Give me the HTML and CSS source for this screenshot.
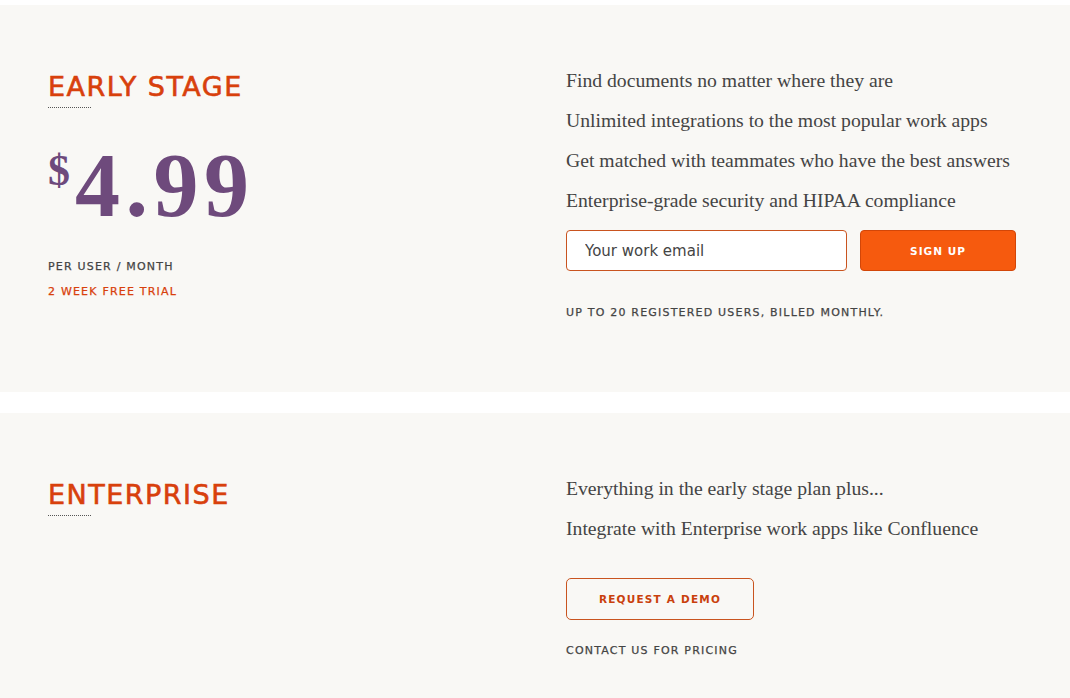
FILE: index.html
```html
<!DOCTYPE html>
<html lang="en">
<head>
<meta charset="utf-8">
<title>Pricing</title>
<link rel="stylesheet" href="styles.css">
</head>
<body>
<main class="page">
  <section class="plan plan-early">
    <div class="plan-left">
      <h2 class="plan-title">EARLY STAGE</h2>
      <div class="price"><span class="currency">$</span><span class="amount">4.99</span></div>
      <p class="caption">PER USER / MONTH</p>
      <p class="caption accent">2 WEEK FREE TRIAL</p>
    </div>
    <div class="plan-right">
      <ul class="features">
        <li>Find documents no matter where they are</li>
        <li>Unlimited integrations to the most popular work apps</li>
        <li>Get matched with teammates who have the best answers</li>
        <li>Enterprise-grade security and HIPAA compliance</li>
      </ul>
      <form class="signup" onsubmit="return false">
        <input class="email" type="email" placeholder="Your work email">
        <button class="btn-primary" type="submit">SIGN UP</button>
      </form>
      <p class="caption note">UP TO 20 REGISTERED USERS, BILLED MONTHLY.</p>
    </div>
  </section>
  <section class="plan plan-enterprise">
    <div class="plan-left">
      <h2 class="plan-title">ENTERPRISE</h2>
    </div>
    <div class="plan-right">
      <ul class="features">
        <li>Everything in the early stage plan plus...</li>
        <li>Integrate with Enterprise work apps like Confluence</li>
      </ul>
      <button class="btn-outline" type="button">REQUEST A DEMO</button>
      <p class="caption contact">CONTACT US FOR PRICING</p>
    </div>
  </section>
</main>
</body>
</html>
```

FILE: styles.css
```css
* { box-sizing: border-box; }
html, body { margin: 0; padding: 0; background: #ffffff; }
body { font-family: "Liberation Serif", serif; color: #444; }

.page {
  padding-top: 5px;
  display: flex;
  flex-direction: column;
  gap: 21px;
}

.plan {
  background: #f9f8f5;
  display: grid;
  grid-template-columns: 518px 450px;
  padding: 0 48px;
}
.plan-early { height: 387px; padding-top: 66px; }
.plan-enterprise { height: 300px; padding-top: 66px; }

.plan-right { margin-top: -11px; }

.plan-title {
  margin: 0;
  font-family: "DejaVu Sans", sans-serif;
  font-weight: 400;
  font-size: 27px;
  line-height: 32px;
  letter-spacing: 1.5px;
  color: #d8400c;
  -webkit-text-stroke: 0.6px #d8400c;
}
.plan-title::after {
  content: "";
  display: block;
  width: 43px;
  margin-top: 4px;
  border-top: 1px dotted #555;
}

.price {
  display: flex;
  align-items: flex-start;
  margin-top: 38px;
  color: #6e4a7c;
  font-family: "Liberation Serif", serif;
  font-weight: 700;
}
.currency {
  font-size: 44px;
  line-height: 40px;
  margin-top: 5px;
  margin-right: 5px;
}
.amount {
  font-size: 90px;
  line-height: 80px;
  letter-spacing: 5.5px;
}

.caption {
  margin: 0;
  font-family: "DejaVu Sans", sans-serif;
  font-size: 11px;
  line-height: 14px;
  letter-spacing: 1.2px;
  color: #444;
  -webkit-text-stroke: 0.25px currentColor;
}
.plan-left .caption:first-of-type { margin-top: 34px; }
.caption.accent { color: #d8400c; margin-top: 11px; }

.features {
  list-style: none;
  margin: 0;
  padding: 0;
  font-size: 19.7px;
  line-height: 40px;
  color: #444;
}

.signup {
  display: flex;
  gap: 13px;
  margin-top: 10px;
}
.email {
  width: 281px;
  height: 41px;
  border: 1px solid #c9541f;
  border-radius: 4px;
  background: #fff;
  padding: 0 18px;
  font-family: "DejaVu Sans", sans-serif;
  font-size: 15px;
  color: #444;
}
.email::placeholder { color: #444; }
.btn-primary {
  width: 156px;
  height: 41px;
  border: 1px solid #d24608;
  border-radius: 4px;
  background: #f65a0e;
  color: #fff;
  font-family: "DejaVu Sans", sans-serif;
  font-weight: 700;
  font-size: 10.5px;
  letter-spacing: 1px;
}
.note { margin-top: 35px; }

.btn-outline {
  display: block;
  margin-top: 30px;
  width: 188px;
  height: 42px;
  border: 1px solid #c9541f;
  border-radius: 5px;
  background: transparent;
  color: #c9400c;
  font-family: "DejaVu Sans", sans-serif;
  font-weight: 700;
  font-size: 10.5px;
  letter-spacing: 1.2px;
}
.contact { margin-top: 24px; }
```
